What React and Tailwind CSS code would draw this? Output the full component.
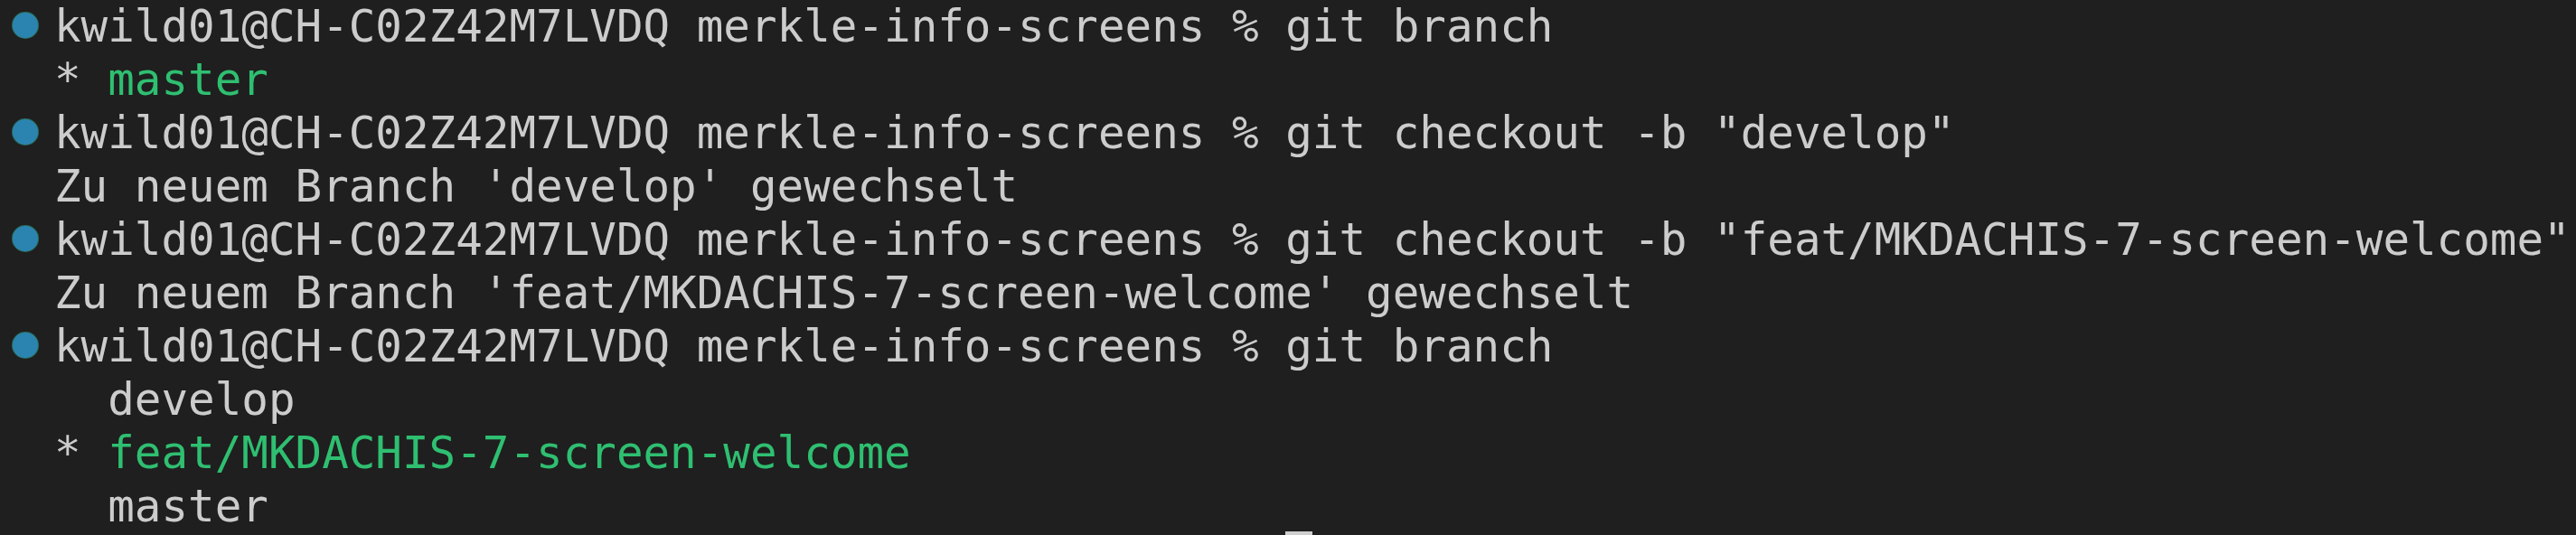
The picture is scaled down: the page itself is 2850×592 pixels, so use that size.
import React from 'react';

const prompt = 'kwild01@CH-C02Z42M7LVDQ merkle-info-screens %';

const lines = [
  { type: 'cmd', text: 'git branch' },
  { type: 'out', parts: [['* ', 'text-[#cccccc]'], ['master', 'text-[#2fbf71]']] },
  { type: 'cmd', text: 'git checkout -b "develop"' },
  { type: 'out', parts: [["Zu neuem Branch 'develop' gewechselt", 'text-[#cccccc]']] },
  { type: 'cmd', text: 'git checkout -b "feat/MKDACHIS-7-screen-welcome"' },
  { type: 'out', parts: [["Zu neuem Branch 'feat/MKDACHIS-7-screen-welcome' gewechselt", 'text-[#cccccc]']] },
  { type: 'cmd', text: 'git branch' },
  { type: 'out', parts: [['  develop', 'text-[#cccccc]']] },
  { type: 'out', parts: [['* ', 'text-[#cccccc]'], ['feat/MKDACHIS-7-screen-welcome', 'text-[#2fbf71]']] },
  { type: 'out', parts: [['  master', 'text-[#cccccc]']] },
];

function Dot() {
  return (
    <span className="absolute left-[14px] top-[calc(50%-2px)] -translate-y-1/2 w-[28px] h-[28px] rounded-full bg-[#2b84b0] ring-1 ring-[#2a6e5a]" />
  );
}

export default function App() {
  return (
    <div className="w-[2850px] h-[592px] overflow-hidden bg-[#1f1f1f]">
      <div
        className="text-[49.2px] leading-[59px] whitespace-pre text-[#cccccc]"
        style={{ fontFamily: '"DejaVu Sans Mono", "Liberation Mono", monospace' }}
      >
        {lines.map((line, i) => (
          <div key={i} className="relative h-[59px] pl-[60px]">
            {line.type === 'cmd' ? (
              <>
                <Dot />
                <span>{prompt} {line.text}</span>
              </>
            ) : (
              line.parts.map(([t, c], j) => (
                <span key={j} className={c}>{t}</span>
              ))
            )}
          </div>
        ))}
        <div className="relative h-[59px] pl-[60px]">
          <span className="absolute left-[calc(60px+46ch)] -top-[2px] w-[1ch] h-[59px] bg-[#cfcfcf]" />
        </div>
      </div>
    </div>
  );
}
